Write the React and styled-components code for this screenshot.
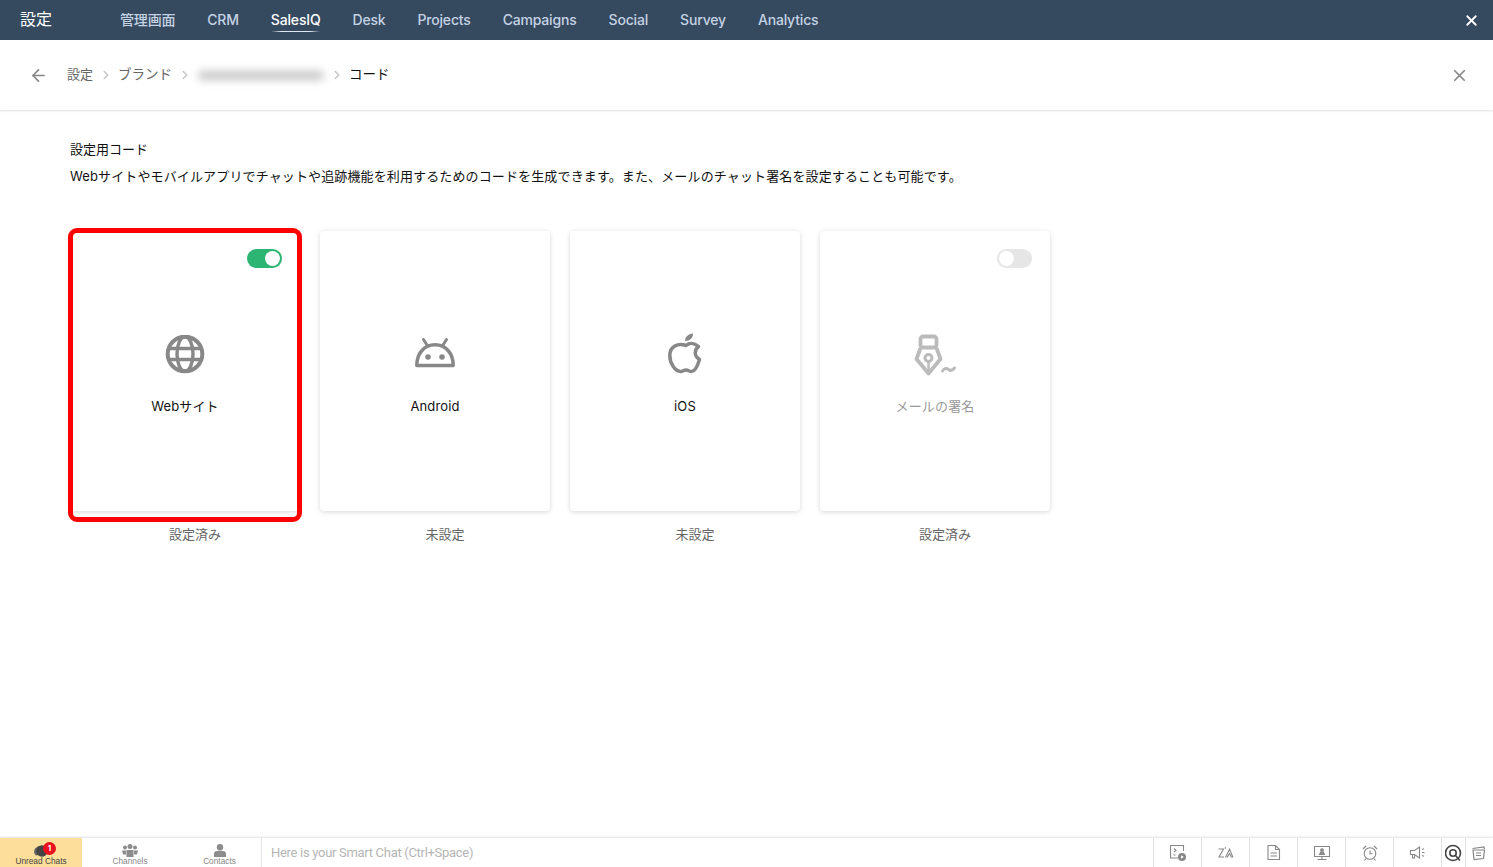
import React from "react";
import styled, { createGlobalStyle } from "styled-components";
import { ArrowLeft, ChevronRight, X } from "lucide-react";

const FONT = `Inter, "Noto Sans CJK JP", sans-serif`;

const tabs = ["管理画面", "CRM", "SalesIQ", "Desk", "Projects", "Campaigns", "Social", "Survey", "Analytics"];

const GlobeIcon = () => (
  <svg width="40" height="40" viewBox="0 1 40 40" fill="none" stroke="#888" strokeWidth="3.400">
    <circle cx="20" cy="20" r="17.300" strokeWidth="4" />
    <ellipse cx="20" cy="20" rx="8" ry="17.300" />
    <path d="M3 14.500h34M3 25.500h34" />
  </svg>
);

const AndroidIcon = () => (
  <svg width="40" height="40" viewBox="0 0 40 40" fill="none">
    <path d="M1.800 30.500C1.800 18 9.500 9.800 20 9.800S38.200 18 38.200 30.500z" stroke="#888" strokeWidth="3.500" strokeLinejoin="round" />
    <path d="M12 10L8.500 4.500M28 10l3.500-5.500" stroke="#888" strokeWidth="3" strokeLinecap="round" />
    <circle cx="13" cy="22" r="2.800" fill="#888" />
    <circle cx="27" cy="22" r="2.800" fill="#888" />
  </svg>
);

const AppleIcon = () => (
  <svg width="40" height="44" viewBox="-1 0 40 44" fill="none">
    <path
      d="M20 12.500c3-2.500 8-3 12.500 1-4 3-5 9.500 1 13-1.500 5-4.500 12-8 12-2.500 0-3-1.500-5.500-1.500s-3 1.500-5.500 1.500C9 38.500 3.800 30 3.800 22.500c0-9 8-13 16.200-10z"
      stroke="#888"
      strokeWidth="3.500"
      strokeLinejoin="round"
    />
    <path d="M19 8c0-4 3-7 8-7.500.3 4-3 7.500-8 7.500z" fill="#888" />
  </svg>
);

const PenIcon = () => (
  <svg width="44" height="44" viewBox="0 0 44 44" fill="none" stroke="#bbb">
    <rect x="7.500" y="3.500" width="16" height="11" rx="2.500" strokeWidth="3.800" />
    <path d="M7.500 15L3.500 26l12 14.500L27.500 26l-4-11" strokeWidth="3.800" strokeLinejoin="round" />
    <circle cx="15.500" cy="25" r="3.500" strokeWidth="3" />
    <path d="M15.500 29v10" strokeWidth="2.500" />
    <path d="M29.500 38c2-3 4-3 6-1.500s4 1 6-1.500" strokeWidth="3" strokeLinecap="round" />
  </svg>
);

const cards = [
  { name: "Webサイト", status: "設定済み", icon: <GlobeIcon />, toggle: "on", selected: true },
  { name: "Android", status: "未設定", icon: <AndroidIcon /> },
  { name: "iOS", status: "未設定", icon: <AppleIcon /> },
  { name: "メールの署名", status: "設定済み", icon: <PenIcon />, toggle: "off", muted: true },
];

const toolIcons = [
  <g key="a">
    <path d="M9 14H1.500V1.500h13V7" />
    <path d="M5 4.500l2 1.800L5 8M4.500 11h2" />
    <circle cx="13" cy="13" r="4" fill="#888" stroke="none" />
    <path d="M12 11.200v3.600l2.800-1.800z" fill="#fff" stroke="none" />
  </g>,
  <g key="b">
    <path d="M1.500 5h5L2 13h5M8 3.500l1 1M8.500 13.500L12.500 5l3.500 8.500M10 13.500l2.500-4 2 4" />
  </g>,
  <g key="c">
    <path d="M3 1.500h7.500l4 4v10H3z" />
    <path d="M10.500 1.500v4h4M5.500 9h6.500M5.500 12h6.500" />
  </g>,
  <g key="d">
    <path d="M1.500 2.500h15v10h-15zM9 12.500v2.500M4.500 15.500h9" />
    <path d="M6.500 10.500h5L10.300 8H7.700z" fill="#888" />
    <circle cx="9" cy="6" r="1.300" fill="#888" />
  </g>,
  <g key="e">
    <circle cx="9" cy="9.500" r="5.800" />
    <path d="M9 6.500v3.200h2.500M2 5l3-3M16 5l-3-3M5 14.500L3.500 16.500M13 14.500l1.500 2" />
  </g>,
  <g key="f">
    <path d="M1.500 6.500h4l5-3.500v11l-5-3.500h-4zM3.500 10.500v3.500h2v-3.500M13 5.500l2-.8M13 8.500h2.500M13 11.500l2 .8" />
  </g>,
];

const App = () => (
  <Page>
    <GlobalStyle />
    <TopBar>
      <Title>設定</Title>
      <Tabs>
        {tabs.map((tab) => (
          <Tab key={tab} $active={tab === "SalesIQ"}>
            {tab}
          </Tab>
        ))}
      </Tabs>
      <TopClose>
        <X size={17} strokeWidth={2.500} />
      </TopClose>
    </TopBar>

    <Breadcrumbs>
      <BackBtn>
        <ArrowLeft size={19} strokeWidth={2.200} />
      </BackBtn>
      <Crumb>設定</Crumb>
      <Sep>
        <ChevronRight size={14} strokeWidth={2.500} />
      </Sep>
      <Crumb $large>ブランド</Crumb>
      <Sep>
        <ChevronRight size={14} strokeWidth={2.500} />
      </Sep>
      <BlurredName />
      <Sep>
        <ChevronRight size={14} strokeWidth={2.500} />
      </Sep>
      <Crumb $large $current>
        コード
      </Crumb>
      <PageClose>
        <X size={19} strokeWidth={2.200} />
      </PageClose>
    </Breadcrumbs>

    <Main>
      <Heading>設定用コード</Heading>
      <Description>
        Webサイトやモバイルアプリでチャットや追跡機能を利用するためのコードを生成できます。また、メールのチャット署名を設定することも可能です。
      </Description>
      <CardRow>
        {cards.map((card) => (
          <CardColumn key={card.name}>
            <Card>
              {card.selected && <Highlight />}
              {card.toggle && (
                <Toggle $on={card.toggle === "on"}>
                  <Knob />
                </Toggle>
              )}
              <CardIcon>{card.icon}</CardIcon>
              <CardName $muted={card.muted}>{card.name}</CardName>
            </Card>
            <Status>{card.status}</Status>
          </CardColumn>
        ))}
      </CardRow>
    </Main>

    <BottomBar>
      <BottomTab $active>
        <svg width="14" height="12" viewBox="0 0 14 12">
          <path d="M5 1C2 2 0 4 0 6.500c0 1.500.7 3 2 4l5-1z" fill="#666" />
          <circle cx="8" cy="6" r="5.800" fill="#444" />
        </svg>
        <Badge>1</Badge>
        <BottomLabel $active>Unread Chats</BottomLabel>
      </BottomTab>
      <BottomTab $width={96}>
        <svg width="16" height="13" viewBox="0 0 16 13" fill="#8c8c8c">
          <circle cx="3" cy="3.500" r="2" />
          <circle cx="13" cy="3.500" r="2" />
          <circle cx="8" cy="2.500" r="2.500" />
          <path d="M0 6.500h4v4H1zM12 6.500h4l-1 4h-3zM4.500 6h7v7h-7z" />
        </svg>
        <BottomLabel>Channels</BottomLabel>
      </BottomTab>
      <BottomTab $width={83}>
        <svg width="14" height="13" viewBox="0 0 14 13" fill="#8c8c8c">
          <circle cx="7" cy="3.200" r="3.200" />
          <path d="M1 13V9.500C1 7.500 3 6.800 7 6.800s6 .7 6 2.700V13z" />
        </svg>
        <BottomLabel>Contacts</BottomLabel>
      </BottomTab>
      <SmartChat>Here is your Smart Chat (Ctrl+Space)</SmartChat>
      {toolIcons.map((icon, i) => (
        <ToolCell key={i}>
          <svg width="18" height="18" viewBox="0 0 18 18" fill="none" stroke="#888" strokeWidth="1.100">
            {icon}
          </svg>
        </ToolCell>
      ))}
      <ToolCell $width={23}>
        <svg width="18" height="18" viewBox="1 0 18 18" fill="none" stroke="#444" strokeWidth="1.600">
          <circle cx="9" cy="9" r="7.500" />
          <circle cx="9" cy="9" r="3.200" />
          <path d="M11 11l5 5.500" />
        </svg>
      </ToolCell>
      <ToolCell $width={27}>
        <svg width="16" height="16" viewBox="1.500 0 16 16" fill="none" stroke="#888" strokeWidth="1.200">
          <path d="M2 3.500L13.500 2l.5 2M2.500 5h11.500l-1 8.500-9.500 1z" />
          <path d="M5.500 8h5M5.500 10.500h5" />
        </svg>
      </ToolCell>
    </BottomBar>
  </Page>
);

export default App;

const GlobalStyle = createGlobalStyle`
  html, body {
    margin: 0;
    height: 100%;
    background: #fff;
  }
  #root {
    height: 100%;
  }
`;

const Page = styled.div`
  height: 867px;
  display: flex;
  flex-direction: column;
  overflow: hidden;
  font-family: ${FONT};
  color: #111;
`;

const TopBar = styled.header`
  height: 40px;
  flex: none;
  display: flex;
  align-items: center;
  background: #35495f;
  padding-left: 20px;
`;

const Title = styled.div`
  width: 100px;
  color: #fff;
  font-size: 16px;
  margin-top: -5px;
`;

const Tabs = styled.nav`
  display: flex;
  gap: 32px;
  height: 100%;
`;

const Tab = styled.div`
  height: 100%;
  box-sizing: border-box;
  padding-bottom: 2px;
  display: flex;
  align-items: center;
  position: relative;
  font-size: 14px;
  font-weight: 500;
  letter-spacing: -0.18px;
  color: ${(p) => (p.$active ? "#fff" : "#c4d3e4")};
  &::after {
    content: "";
    display: ${(p) => (p.$active ? "block" : "none")};
    position: absolute;
    left: 0;
    right: 0;
    top: 31px;
    height: 1px;
    background: linear-gradient(90deg, transparent, #dfe6ee 20%, #dfe6ee 80%, transparent);
  }
`;

const TopClose = styled.div`
  margin-left: auto;
  width: 43px;
  display: flex;
  justify-content: center;
  color: #fff;
`;

const Breadcrumbs = styled.div`
  height: 70px;
  flex: none;
  display: flex;
  align-items: center;
  padding: 0 24px 0 29px;
  box-shadow: 0 1px 2px rgba(0, 0, 0, 0.13);
  position: relative;
`;

const BackBtn = styled.div`
  width: 38px;
  display: flex;
  color: #888;
`;

const Crumb = styled.div`
  font-size: ${(p) => (p.$large ? 13.500 : 13)}px;
  color: ${(p) => (p.$current ? "#111" : "#666")};
  margin-top: -4px;
`;

const Sep = styled.div`
  display: flex;
  margin: 0 5px 0 6px;
  width: 14px;
  color: #c4c4c4;
`;

const BlurredName = styled.div`
  width: 126px;
  height: 9px;
  margin: 0 0 0 1px;
  border-radius: 5px;
  background: #c6c6c6;
  filter: blur(4px);
`;

const PageClose = styled.div`
  margin-left: auto;
  display: flex;
  color: #888;
`;

const Main = styled.main`
  flex: 1;
  padding: 30px 0 0 70px;
`;

const Heading = styled.div`
  font-size: 13px;
  line-height: 18px;
`;

const Description = styled.div`
  font-size: 13px;
  line-height: 18px;
  letter-spacing: 0.13px;
  margin-top: 9px;
`;

const CardRow = styled.div`
  display: flex;
  margin-top: 46px;
`;

const CardColumn = styled.div`
  width: 250px;
  display: flex;
  flex-direction: column;
`;

const Card = styled.div`
  width: 230px;
  height: 280px;
  box-sizing: border-box;
  position: relative;
  display: flex;
  flex-direction: column;
  align-items: center;
  padding-top: 102px;
  background: #fff;
  border-radius: 4px;
  box-shadow: 0 1px 5px rgba(0, 0, 0, 0.16);
`;

const Highlight = styled.div`
  position: absolute;
  left: -2px;
  top: -3px;
  width: 234px;
  height: 294px;
  box-sizing: border-box;
  border: 5px solid #ff0000;
  border-radius: 9px;
`;

const Toggle = styled.div`
  position: absolute;
  top: 18px;
  right: 18px;
  width: 35px;
  height: 19px;
  box-sizing: border-box;
  padding: 2px;
  display: flex;
  justify-content: ${(p) => (p.$on ? "flex-end" : "flex-start")};
  border-radius: 10px;
  background: ${(p) => (p.$on ? "#2cb573" : "#e6e6e6")};
`;

const Knob = styled.div`
  width: 15px;
  height: 15px;
  border-radius: 50%;
  background: #fff;
`;

const CardIcon = styled.div`
  height: 44px;
  display: flex;
  align-items: center;
  justify-content: center;
`;

const CardName = styled.div`
  margin-top: 20px;
  font-size: 13px;
  line-height: 18px;
  letter-spacing: 0.13px;
  color: ${(p) => (p.$muted ? "#999" : "#111")};
`;

const Status = styled.div`
  margin-top: 14px;
  text-align: center;
  font-size: 13px;
  line-height: 18px;
  color: #666;
`;

const BottomBar = styled.footer`
  height: 29px;
  flex: none;
  display: flex;
  box-shadow: 0 -1px 2px rgba(0, 0, 0, 0.12);
  position: relative;
`;

const BottomTab = styled.div`
  width: ${(p) => p.$width || 82}px;
  box-sizing: border-box;
  padding-bottom: 1px;
  flex: none;
  position: relative;
  display: flex;
  flex-direction: column;
  align-items: center;
  justify-content: flex-end;
  background: ${(p) => (p.$active ? "#fddf9b" : "#fff")};
`;

const BottomLabel = styled.div`
  font-size: 8.300px;
  line-height: 9px;
  font-family: "Liberation Sans", sans-serif;
  color: ${(p) => (p.$active ? "#444" : "#888")};
`;

const Badge = styled.div`
  position: absolute;
  top: 4px;
  left: 43px;
  width: 13px;
  height: 13px;
  border-radius: 50%;
  background: #e8111d;
  color: #fff;
  font-size: 8px;
  font-weight: 700;
  line-height: 13px;
  text-align: center;
`;

const SmartChat = styled.div`
  flex: 1;
  display: flex;
  align-items: center;
  padding-left: 9px;
  border-left: 1px solid #e4e4e4;
  font-size: 13px;
  letter-spacing: -0.3px;
  color: #b5b5b5;
  font-family: Roboto, sans-serif;
`;

const ToolCell = styled.div`
  width: ${(p) => p.$width || 47}px;
  flex: none;
  display: flex;
  align-items: center;
  justify-content: center;
  border-left: 1px solid #e0e0e0;
`;
